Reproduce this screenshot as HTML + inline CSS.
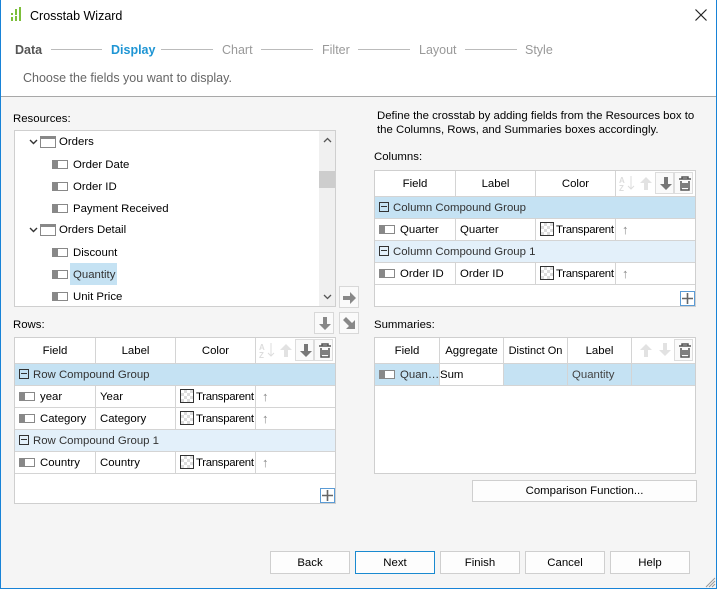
<!DOCTYPE html>
<html><head><meta charset="utf-8"><style>
*{box-sizing:border-box;margin:0;padding:0}
body{width:717px;height:589px;position:relative;overflow:hidden;font-family:"Liberation Sans",sans-serif;font-size:11.4px;color:#000;background:#f5f5f5}
.a{position:absolute;white-space:nowrap}
.win{position:absolute;left:0;top:0;width:717px;height:589px;border:1px solid #1883d7;border-top:none}
.top{position:absolute;left:1px;top:0;width:715px;height:97px;background:#fff;border-bottom:1px solid #a8a8a8}
.box{position:absolute;background:#fff;border:1px solid #cfcfcf}
.cell{position:absolute;border-right:1px solid #d4d4d4;border-bottom:1px solid #d4d4d4;height:100%;line-height:22px;padding-left:4px;overflow:hidden}
.hd{position:absolute;text-align:center;line-height:26px;border-right:1px solid #d4d4d4;border-bottom:1px solid #d4d4d4;height:26px;top:0}
.fi{display:inline-block;width:16px;height:9px;border:1px solid #888;border-left:6px solid #888;vertical-align:-1px;margin-right:5px;background:#fff}
.sw{display:inline-block;width:14px;height:14px;border:1px solid #333;vertical-align:-3px;margin-right:2px;background:repeating-conic-gradient(#ddd 0 25%,#fff 0 50%) 0 0/6px 6px}
.t{letter-spacing:-0.3px}
.grp{position:absolute;left:0;right:0;height:22px;line-height:22px;padding-left:4px;color:#333;border-bottom:1px solid #d4d4d4}
.min{display:inline-block;width:10px;height:10px;border:1px solid #333;position:relative;vertical-align:-1px;margin-right:4px}
.min:after{content:"";position:absolute;left:1px;top:3px;width:6px;height:1px;background:#333}
.btn{position:absolute;height:23px;border:1px solid #cfcfcf;background:#fdfdfd;text-align:center;line-height:22px}
.ib{position:absolute;width:20px;height:22px;border:1px solid #d8d8d8;background:#fafafa}
.ib svg,.tb svg{position:absolute;left:2px;top:3px}
.tb{position:absolute;width:19px;height:22px;top:1px}
.step{color:#555;font-size:12.5px}
.ln{position:absolute;height:1px;background:#bbb;top:49px}
.up{font-size:13px;color:#888}
</style></head><body>
<div class="top"></div>
<div class="win"></div>
<svg class="a" style="left:10px;top:6px" width="12" height="16"><rect x="1" y="7" width="2" height="2" fill="#7cbf3a"/><rect x="1" y="11" width="2" height="4" fill="#7cbf3a"/><rect x="5" y="3" width="2" height="12" fill="#7cbf3a"/><rect x="9" y="1" width="2" height="14" fill="#7cbf3a"/><rect x="4" y="9" width="4" height="1" fill="#fff"/></svg>
<div class="a" style="left:30px;top:9px;font-size:12.5px">Crosstab Wizard</div>
<svg class="a" style="left:695px;top:9px" width="12" height="12"><path d="M0.5 0.5L11.5 11.5M11.5 0.5L0.5 11.5" stroke="#222" stroke-width="1.2"/></svg>
<div class="a step" style="left:15px;top:43px;font-weight:bold">Data</div>
<div class="ln" style="left:51px;width:51px"></div>
<div class="a step" style="left:111px;top:43px;font-weight:bold;color:#1e95d4">Display</div>
<div class="ln" style="left:161px;width:52px"></div>
<div class="a step" style="left:222px;top:43px;color:#999">Chart</div>
<div class="ln" style="left:261px;width:52px"></div>
<div class="a step" style="left:322px;top:43px;color:#999">Filter</div>
<div class="ln" style="left:358px;width:52px"></div>
<div class="a step" style="left:419px;top:43px;color:#999">Layout</div>
<div class="ln" style="left:465px;width:52px"></div>
<div class="a step" style="left:525px;top:43px;color:#999">Style</div>
<div class="a" style="left:23px;top:71px;font-size:12.5px;color:#666">Choose the fields you want to display.</div>

<div class="a" style="left:13px;top:113px">Resources:</div>
<div class="box" style="left:14px;top:130px;width:322px;height:177px;overflow:hidden">
 <div class="a" style="left:304px;top:0;width:17px;height:175px;background:#f0f0f0"></div>
 <div class="a" style="left:304px;top:40px;width:16px;height:17px;background:#cdcdcd"></div>
 <svg class="a" style="left:308px;top:6px" width="9" height="6"><path d="M1 5L4.5 1.5L8 5" stroke="#555" fill="none" stroke-width="1.3"/></svg>
 <svg class="a" style="left:308px;top:163px" width="9" height="6"><path d="M1 1L4.5 4.5L8 1" stroke="#555" fill="none" stroke-width="1.3"/></svg>
 <svg class="a" style="left:14px;top:8px" width="9" height="6"><path d="M1 1L4.5 4.5L8 1" stroke="#333" fill="none" stroke-width="1.4"/></svg>
 <div class="a" style="left:25px;top:5px;width:16px;height:12px;border:1px solid #888;border-top:3px solid #888"></div>
 <div class="a" style="left:44px;top:5px">Orders</div>
 <div class="a" style="left:37px;top:26px;line-height:16px"><span class="fi"></span>Order Date</div>
 <div class="a" style="left:37px;top:48px;line-height:16px"><span class="fi"></span>Order ID</div>
 <div class="a" style="left:37px;top:70px;line-height:16px"><span class="fi"></span>Payment Received</div>
 <svg class="a" style="left:14px;top:96px" width="9" height="6"><path d="M1 1L4.5 4.5L8 1" stroke="#333" fill="none" stroke-width="1.4"/></svg>
 <div class="a" style="left:25px;top:93px;width:16px;height:12px;border:1px solid #888;border-top:3px solid #888"></div>
 <div class="a" style="left:44px;top:93px">Orders Detail</div>
 <div class="a" style="left:37px;top:114px;line-height:16px"><span class="fi"></span>Discount</div>
 <div class="a" style="left:55px;top:132px;width:47px;height:22px;background:#c5e2f3"></div>
 <div class="a" style="left:37px;top:136px;line-height:16px;color:#333"><span class="fi"></span>Quantity</div>
 <div class="a" style="left:37px;top:158px;line-height:16px"><span class="fi"></span>Unit Price</div>
</div>
<div class="ib" style="left:339px;top:286px"><svg width="16" height="16"><path d="M1 6H8V2L14 8L8 14V10H1Z" fill="#888"/></svg></div>
<div class="ib" style="left:314px;top:312px"><svg width="16" height="16"><path d="M6 1H10V8H14L8 14L2 8H6Z" fill="#888"/></svg></div>
<div class="ib" style="left:339px;top:312px"><svg width="16" height="16"><path d="M1 4L4 1L10 7L13 4V13H4L7 10Z" fill="#888"/></svg></div>

<div class="a" style="left:13px;top:319px">Rows:</div>
<div class="box" style="left:14px;top:337px;width:322px;height:167px">
 <div class="hd" style="left:0;width:81px">Field</div>
 <div class="hd" style="left:81px;width:80px">Label</div>
 <div class="hd" style="left:161px;width:80px">Color</div>
 <div class="hd" style="left:241px;width:79px;border-right:none"></div>
 <div class="tb" style="left:242px"><svg width="16" height="16"><text x="0" y="8" font-size="8" fill="#ddd" font-weight="bold">A</text><text x="0" y="16" font-size="8" fill="#ddd" font-weight="bold">Z</text><path d="M12 1V14M9 11L12 14L15 11" stroke="#ddd" fill="none"/></svg></div>
 <div class="tb" style="left:261px"><svg width="16" height="16"><path d="M6 15H10V8H14L8 2L2 8H6Z" fill="#e2e2e2"/></svg></div>
 <div class="tb" style="left:280px;border:1px solid #ddd;background:#fafafa"><svg width="16" height="16"><path d="M6 1H10V8H14L8 14L2 8H6Z" fill="#777"/></svg></div>
 <div class="tb" style="left:299px;border:1px solid #ddd;background:#fafafa"><svg width="16" height="16"><path d="M2 3H14M5 3V1H11V3M4 5V14H12V5M6 7V12M8 7V12M10 7V12" stroke="#555" fill="none" stroke-width="1.5"/></svg></div>
 <div class="grp" style="top:26px;background:#c5e2f3"><span class="min"></span>Row Compound Group</div>
 <div class="a" style="left:0;top:48px;width:320px;height:22px"><div class="cell" style="left:0;width:81px"><span class="fi"></span>year</div><div class="cell" style="left:81px;width:80px">Year</div><div class="cell t" style="left:161px;width:80px"><span class="sw"></span>Transparent</div><div class="cell up" style="left:241px;width:79px;border-right:none;padding-left:6px">↑</div></div>
 <div class="a" style="left:0;top:70px;width:320px;height:22px"><div class="cell" style="left:0;width:81px"><span class="fi"></span>Category</div><div class="cell" style="left:81px;width:80px">Category</div><div class="cell t" style="left:161px;width:80px"><span class="sw"></span>Transparent</div><div class="cell up" style="left:241px;width:79px;border-right:none;padding-left:6px">↑</div></div>
 <div class="grp" style="top:92px;background:#e3f0fa"><span class="min"></span>Row Compound Group 1</div>
 <div class="a" style="left:0;top:114px;width:320px;height:22px"><div class="cell" style="left:0;width:81px"><span class="fi"></span>Country</div><div class="cell" style="left:81px;width:80px">Country</div><div class="cell t" style="left:161px;width:80px"><span class="sw"></span>Transparent</div><div class="cell up" style="left:241px;width:79px;border-right:none;padding-left:6px">↑</div></div>
 <div class="a" style="left:305px;top:150px;width:15px;height:15px;border:1px solid #5b9bd5"><svg style="position:absolute;left:1px;top:1px" width="11" height="11"><path d="M5.5 0V11M0 5.5H11" stroke="#666" stroke-width="1.6"/></svg></div>
</div>

<div class="a" style="left:377px;top:109px;line-height:14px">Define the crosstab by adding fields from the Resources box to<br>the Columns, Rows, and Summaries boxes accordingly.</div>
<div class="a" style="left:374px;top:151px">Columns:</div>
<div class="box" style="left:374px;top:170px;width:322px;height:137px">
 <div class="hd" style="left:0;width:81px">Field</div>
 <div class="hd" style="left:81px;width:80px">Label</div>
 <div class="hd" style="left:161px;width:80px">Color</div>
 <div class="hd" style="left:241px;width:79px;border-right:none"></div>
 <div class="tb" style="left:242px"><svg width="16" height="16"><text x="0" y="8" font-size="8" fill="#ddd" font-weight="bold">A</text><text x="0" y="16" font-size="8" fill="#ddd" font-weight="bold">Z</text><path d="M12 1V14M9 11L12 14L15 11" stroke="#ddd" fill="none"/></svg></div>
 <div class="tb" style="left:261px"><svg width="16" height="16"><path d="M6 15H10V8H14L8 2L2 8H6Z" fill="#e2e2e2"/></svg></div>
 <div class="tb" style="left:280px;border:1px solid #ddd;background:#fafafa"><svg width="16" height="16"><path d="M6 1H10V8H14L8 14L2 8H6Z" fill="#777"/></svg></div>
 <div class="tb" style="left:299px;border:1px solid #ddd;background:#fafafa"><svg width="16" height="16"><path d="M2 3H14M5 3V1H11V3M4 5V14H12V5M6 7V12M8 7V12M10 7V12" stroke="#555" fill="none" stroke-width="1.5"/></svg></div>
 <div class="grp" style="top:26px;background:#c5e2f3"><span class="min"></span>Column Compound Group</div>
 <div class="a" style="left:0;top:48px;width:320px;height:22px"><div class="cell" style="left:0;width:81px"><span class="fi"></span>Quarter</div><div class="cell" style="left:81px;width:80px">Quarter</div><div class="cell t" style="left:161px;width:80px"><span class="sw"></span>Transparent</div><div class="cell up" style="left:241px;width:79px;border-right:none;padding-left:6px">↑</div></div>
 <div class="grp" style="top:70px;background:#e3f0fa"><span class="min"></span>Column Compound Group 1</div>
 <div class="a" style="left:0;top:92px;width:320px;height:22px"><div class="cell" style="left:0;width:81px"><span class="fi"></span>Order ID</div><div class="cell" style="left:81px;width:80px">Order ID</div><div class="cell t" style="left:161px;width:80px"><span class="sw"></span>Transparent</div><div class="cell up" style="left:241px;width:79px;border-right:none;padding-left:6px">↑</div></div>
 <div class="a" style="left:305px;top:120px;width:15px;height:15px;border:1px solid #5b9bd5"><svg style="position:absolute;left:1px;top:1px" width="11" height="11"><path d="M5.5 0V11M0 5.5H11" stroke="#666" stroke-width="1.6"/></svg></div>
</div>

<div class="a" style="left:374px;top:319px">Summaries:</div>
<div class="box" style="left:374px;top:337px;width:322px;height:137px">
 <div class="hd" style="left:0;width:65px">Field</div>
 <div class="hd" style="left:65px;width:64px">Aggregate</div>
 <div class="hd" style="left:129px;width:64px;font-size:11px">Distinct On</div>
 <div class="hd" style="left:193px;width:64px">Label</div>
 <div class="hd" style="left:257px;width:63px;border-right:none"></div>
 <div class="tb" style="left:261px"><svg width="16" height="16"><path d="M6 15H10V8H14L8 2L2 8H6Z" fill="#e2e2e2"/></svg></div>
 <div class="tb" style="left:280px"><svg width="16" height="16"><path d="M6 1H10V8H14L8 14L2 8H6Z" fill="#e2e2e2"/></svg></div>
 <div class="tb" style="left:299px;border:1px solid #ddd;background:#fafafa"><svg width="16" height="16"><path d="M2 3H14M5 3V1H11V3M4 5V14H12V5M6 7V12M8 7V12M10 7V12" stroke="#555" fill="none" stroke-width="1.5"/></svg></div>
 <div class="a" style="left:0;top:26px;width:320px;height:22px;background:#c5e2f3"><div class="cell" style="left:0;width:65px;color:#333"><span class="fi"></span>Quan…</div><div class="cell" style="left:65px;width:64px;background:#fff;padding-left:0">Sum</div><div class="cell" style="left:129px;width:64px"></div><div class="cell" style="left:193px;width:64px;color:#444">Quantity</div><div class="cell" style="left:257px;width:63px;border-right:none"></div></div>
</div>
<div class="btn" style="left:472px;top:480px;width:225px;height:22px;line-height:21px">Comparison Function...</div>

<div class="btn" style="left:270px;top:551px;width:80px">Back</div>
<div class="btn" style="left:355px;top:551px;width:80px;border-color:#1a8ad0">Next</div>
<div class="btn" style="left:440px;top:551px;width:80px">Finish</div>
<div class="btn" style="left:525px;top:551px;width:80px">Cancel</div>
<div class="btn" style="left:610px;top:551px;width:80px">Help</div>
<svg class="a" style="left:704px;top:576px" width="12" height="12"><path d="M11 2L2 11M11 5L5 11M11 8L8 11" stroke="#999" stroke-width="1"/></svg>
</body></html>
